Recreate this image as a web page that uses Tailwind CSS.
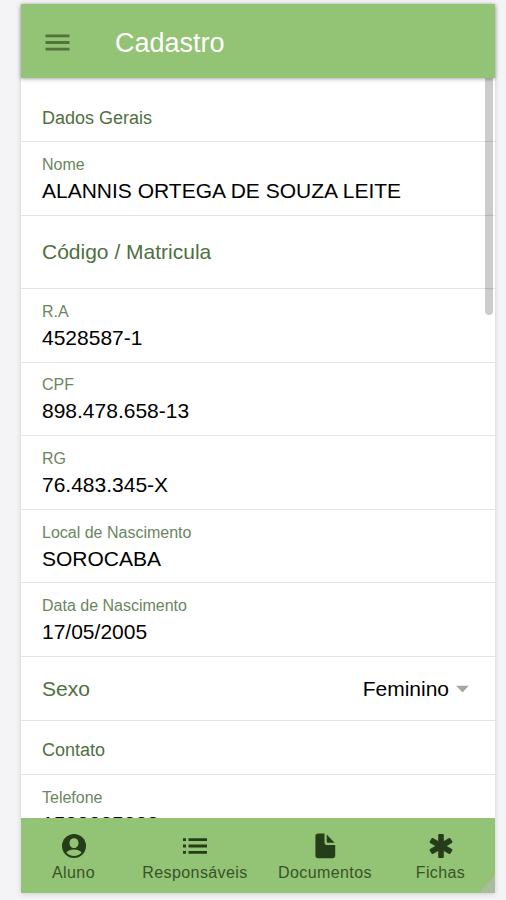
<!DOCTYPE html>
<html lang="pt-BR">
<head>
<meta charset="utf-8">
<meta name="viewport" content="width=device-width, initial-scale=1">
<title>Cadastro</title>
<script src="https://cdn.jsdelivr.net/npm/@tailwindcss/browser@4"></script>
</head>
<body class="bg-[#f4f4f7] font-['Liberation_Sans',Arial,sans-serif]">
<div class="h-screen pl-[21px] pr-[11px] pt-1 pb-[7px]">
  <div class="relative flex h-full flex-col bg-white shadow-[0_1px_5px_rgba(0,0,0,0.16)]">
    <header class="relative z-10 flex h-[74px] shrink-0 items-center bg-[#93c375] pl-6 pt-1 shadow-[0_1px_4px_rgba(0,0,0,0.35)]">
      <button type="button" aria-label="Menu" class="text-[#50753a]">
        <svg class="block h-[18px] w-[25px]" viewBox="0 0 25 18" fill="currentColor"><path d="M0.500 0.500h24v2.800H0.500zM0.500 7.100h24v2.800H0.500zM0.500 13.700h24v2.800H0.500z"/></svg>
      </button>
      <h1 class="ml-[45px] text-[27px] leading-8 text-white">Cadastro</h1>
    </header>

    <main class="relative min-h-0 flex-1 overflow-hidden">
      <h2 class="flex h-16 items-center border-b border-[#e4e4e4] px-[21px] pt-4 text-lg text-[#4f7040]">Dados Gerais</h2>
      <div class="grid min-h-[515px] auto-rows-fr">
        <div class="flex flex-col justify-center border-b border-[#e4e4e4] px-[21px] pt-[5px]">
          <label for="nome" class="text-base leading-5 text-[#6c8560]">Nome</label>
          <input id="nome" value="ALANNIS ORTEGA DE SOUZA LEITE" class="h-8 w-full text-[21px] text-black outline-none">
        </div>
        <h2 class="flex items-center border-b border-[#e4e4e4] px-[21px] text-[21px] text-[#4f7040]">Código / Matricula</h2>
        <div class="flex flex-col justify-center border-b border-[#e4e4e4] px-[21px] pt-[5px]">
          <label for="ra" class="text-base leading-5 text-[#6c8560]">R.A</label>
          <input id="ra" value="4528587-1" class="h-8 w-full text-[21px] text-black outline-none">
        </div>
        <div class="flex flex-col justify-center border-b border-[#e4e4e4] px-[21px] pt-[5px]">
          <label for="cpf" class="text-base leading-5 text-[#6c8560]">CPF</label>
          <input id="cpf" value="898.478.658-13" class="h-8 w-full text-[21px] text-black outline-none">
        </div>
        <div class="flex flex-col justify-center border-b border-[#e4e4e4] px-[21px] pt-[5px]">
          <label for="rg" class="text-base leading-5 text-[#6c8560]">RG</label>
          <input id="rg" value="76.483.345-X" class="h-8 w-full text-[21px] text-black outline-none">
        </div>
        <div class="flex flex-col justify-center border-b border-[#e4e4e4] px-[21px] pt-[5px]">
          <label for="local" class="text-base leading-5 text-[#6c8560]">Local de Nascimento</label>
          <input id="local" value="SOROCABA" class="h-8 w-full text-[21px] text-black outline-none">
        </div>
        <div class="flex flex-col justify-center border-b border-[#e4e4e4] px-[21px] pt-[5px]">
          <label for="data" class="text-base leading-5 text-[#6c8560]">Data de Nascimento</label>
          <input id="data" value="17/05/2005" class="h-8 w-full text-[21px] text-black outline-none">
        </div>
      </div>
      <div class="flex h-16 items-center border-b border-[#e4e4e4] pl-[21px] pr-[26px]">
        <label for="sexo" class="text-[21px] text-[#4f7040]">Sexo</label>
        <div class="relative ml-auto">
          <select id="sexo" class="field-sizing-content appearance-none bg-transparent pr-5 text-[21px] text-black outline-none">
            <option>Feminino</option>
            <option>Masculino</option>
          </select>
          <svg class="pointer-events-none absolute right-0 top-1/2 h-[7px] w-[13px] -translate-y-1/2" viewBox="0 0 13 7" fill="#a6a6a6"><path d="M0 0h13L6.500 7z"/></svg>
        </div>
      </div>
      <h2 class="flex h-[54px] items-center border-b border-[#e4e4e4] px-[21px] pt-1 text-lg text-[#4f7040]">Contato</h2>
      <div class="flex h-[74px] flex-col justify-center border-b border-[#e4e4e4] px-[21px] pt-[5px]">
        <label for="tel" class="text-base leading-5 text-[#6c8560]">Telefone</label>
        <input id="tel" type="tel" value="1533235238" class="h-8 w-full text-[21px] text-black outline-none">
      </div>
      <div class="absolute right-[2px] top-0 h-[237px] w-2 rounded-b bg-black/20"></div>
    </main>

    <nav class="relative grid h-[75px] shrink-0 grid-cols-[105fr_138fr_122fr_109fr] bg-[#93c375] text-base leading-5 tracking-wide text-[#38532a]">
      <a href="#aluno" class="flex flex-col items-center gap-1 pt-[15px]">
        <svg class="h-[26px] w-[26px]" viewBox="0 0 26 26"><circle cx="13" cy="13" r="12" fill="#263d1a"/><path fill="#93c375" d="M13 5.200c2.700 0 4.500 2 4.500 4.700 0 2.400-1.500 5.100-4.500 5.100s-4.500-2.700-4.500-5.100c0-2.700 1.800-4.700 4.500-4.700zM13 23c-3.100 0-5.800-1.300-7.600-3.400 1.500-2.100 4.500-3.200 7.600-3.200s6.100 1.100 7.600 3.200C18.800 21.700 16.100 23 13 23z"/></svg>
        <span>Aluno</span>
      </a>
      <a href="#responsaveis" class="flex flex-col items-center gap-1 pt-[15px]">
        <svg class="h-[26px] w-[26px]" viewBox="0 0 26 26" fill="#263d1a"><path d="M1 5.200h3v2.800H1zM6.500 5.200H25v2.800H6.500zM1 11.600h3v2.800H1zM6.500 11.600H25v2.800H6.500zM1 18h3v2.800H1zM6.500 18H25v2.800H6.500z"/></svg>
        <span>Responsáveis</span>
      </a>
      <a href="#documentos" class="flex flex-col items-center gap-1 pt-[15px]">
        <svg class="h-[26px] w-[26px]" viewBox="0 0 26 26" fill="#263d1a"><path d="M12.500 0.500H6.200Q3.400 0.500 3.400 3.300V22.500Q3.400 25.300 6.200 25.300H20.400Q23.200 25.300 23.200 22.500V12H15.300Q12.500 12 12.500 9.200z"/><path d="M14.700 1.500V8.500Q14.700 9.800 16 9.800H22.600z"/></svg>
        <span>Documentos</span>
      </a>
      <a href="#fichas" class="flex flex-col items-center gap-1 pt-[15px]">
        <svg class="h-[26px] w-[26px]" viewBox="0 0 26 26" fill="#263d1a" stroke="#263d1a" stroke-width="2" stroke-linejoin="round"><path d="M11.200 2h3.600v22h-3.600z"/><path transform="rotate(60 13 13)" d="M11.200 2h3.600v22h-3.600z"/><path transform="rotate(120 13 13)" d="M11.200 2h3.600v22h-3.600z"/></svg>
        <span>Fichas</span>
      </a>
      <svg class="absolute bottom-0 right-0 h-[18px] w-[14px]" viewBox="0 0 14 18" fill="#a8bd9b"><path d="M14 0v18H0v-3z"/></svg>
    </nav>
  </div>
</div>
</body>
</html>
